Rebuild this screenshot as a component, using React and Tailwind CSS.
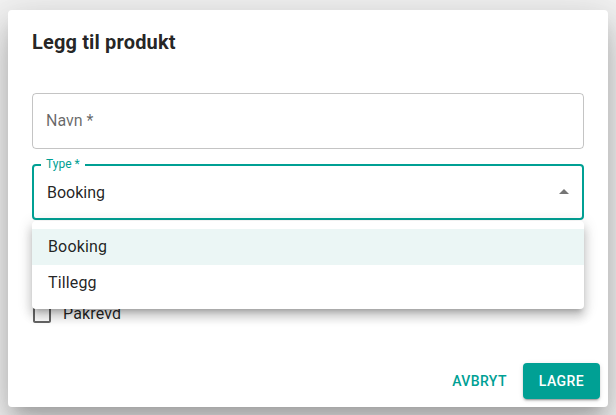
const teal = '#00a094';

function CheckboxIcon() {
  return (
    <svg viewBox="0 0 24 24" className="h-6 w-6 fill-current">
      <path d="M19 5v14H5V5h14m0-2H5c-1.1 0-2 .9-2 2v14c0 1.1.9 2 2 2h14c1.1 0 2-.9 2-2V5c0-1.1-.9-2-2-2z" />
    </svg>
  );
}

function ArrowUp() {
  return (
    <svg viewBox="0 0 24 24" className="h-6 w-6 fill-current rotate-180">
      <path d="M7 10l5 5 5-5z" />
    </svg>
  );
}

const options = ['Booking', 'Tillegg'];

export default function App() {
  return (
    <div
      className="h-[415px] w-[616px] overflow-hidden bg-[#f4f4f4] px-2 pt-[10px]"
      style={{ fontFamily: 'Roboto, "Liberation Sans", sans-serif' }}
    >
      <div className="flex w-[600px] flex-col rounded-[4px] bg-white shadow-[0px_11px_15px_-7px_rgba(0,0,0,0.2),0px_24px_38px_3px_rgba(0,0,0,0.14),0px_9px_46px_8px_rgba(0,0,0,0.12)]">
        <h2 className="px-6 py-4 text-[20px] font-bold leading-8 tracking-[0.15px] text-black/[0.87]">
          Legg til produkt
        </h2>

        <div className="flex flex-col px-6 pb-5 pt-[19px]">
          {/* Navn */}
          <div className="flex h-14 items-center rounded-[4px] border border-black/[0.23] px-[13px]">
            <span className="text-base leading-6 text-black/60">Navn *</span>
          </div>

          {/* Type select, open */}
          <div className="relative mt-[15px]">
            <div className="flex h-14 items-center justify-between rounded-[4px] border-2 border-[#00a094] pl-[13px] pr-[6px]">
              <span className="pt-[2px] text-base leading-6 text-black/[0.87]">Booking</span>
              <span className="text-black/[0.54]">
                <ArrowUp />
              </span>
            </div>
            <span className="absolute left-[9px] top-[-8px] bg-white px-[5px] text-xs leading-4 text-[#00a094]">
              Type *
            </span>

            <ul className="absolute left-0 right-0 top-[57px] z-10 rounded-[4px] bg-white py-2 shadow-[0px_5px_5px_-3px_rgba(0,0,0,0.2),0px_8px_10px_1px_rgba(0,0,0,0.14),0px_3px_14px_2px_rgba(0,0,0,0.12)]">
              {options.map((o, i) => (
                <li
                  key={o}
                  className={
                    i === 0
                      ? 'bg-[#ebf6f5] px-4 py-1.5 text-base leading-6 tracking-[0.15px] text-black/[0.87]'
                      : 'px-4 py-1.5 text-base leading-6 tracking-[0.15px] text-black/[0.87]'
                  }
                >
                  {o}
                </li>
              ))}
            </ul>
          </div>

          {/* Påkrevd */}
          <label className="-ml-[11px] mt-[73px] flex items-center">
            <span className="p-[9px] text-black/60">
              <CheckboxIcon />
            </span>
            <span className="text-base leading-6 tracking-[0.15px] text-black/[0.87]">Påkrevd</span>
          </label>
        </div>

        <div className="flex items-center justify-end gap-2 p-2">
          <button className="h-9 min-w-16 rounded-[4px] px-2 text-sm font-medium uppercase tracking-[0.4px] text-[#00a094]">
            Avbryt
          </button>
          <button className="h-9 min-w-16 rounded-[4px] bg-[#00a094] px-4 text-sm font-medium uppercase tracking-[0.4px] text-white shadow-[0px_3px_1px_-2px_rgba(0,0,0,0.2),0px_2px_2px_0px_rgba(0,0,0,0.14),0px_1px_5px_0px_rgba(0,0,0,0.12)]">
            Lagre
          </button>
        </div>
      </div>
    </div>
  );
}
